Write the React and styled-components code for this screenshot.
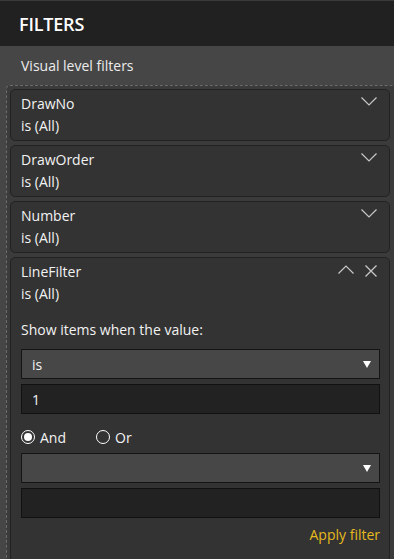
import React from "react";
import styled, { createGlobalStyle } from "styled-components";

const Global = createGlobalStyle`
  html, body { margin: 0; padding: 0; background: #464646; }
  body { font-family: "Open Sans", "Noto Sans", sans-serif; color: #f0f0f0; overflow: hidden; }
  * { box-sizing: border-box; }
`;

const Pane = styled.div`
  width: 394px;
  height: 559px;
  background: #464646;
  overflow: hidden;
  display: flex;
  flex-direction: column;
`;

const Header = styled.div`
  height: 46px;
  flex: none;
  background: #212121;
  border-top: 1px solid #3a3a3a;
  display: flex;
  align-items: center;
  padding-left: 19px;
  font-size: 18px;
  font-weight: 600;
  color: #ffffff;
  letter-spacing: -0.2px;
`;

const SectionTitle = styled.div`
  height: 39px;
  flex: none;
  display: flex;
  align-items: center;
  padding-left: 21px;
  font-size: 14px;
  color: #ececec;
`;

const DropZone = styled.div`
  margin-left: 6px;
  width: 390px;
  flex: none;
  border: 1px dashed #6c6c6c;
  border-radius: 4px;
  background: #3b3b3b;
  padding: 3px 0 40px 3px;
  display: flex;
  flex-direction: column;
  gap: 4px;
`;

const Card = styled.div`
  width: 380px;
  background: #333333;
  border: 1px solid #222222;
  border-radius: 5px;
  padding: 3px 10px ${(p) => (p.$open ? "40px" : "3px")} 10px;
  flex: none;
`;

const TitleRow = styled.div`
  display: flex;
  justify-content: space-between;
  align-items: flex-start;
`;

const Line = styled.div`
  font-size: 14px;
  line-height: 22px;
  color: #f2f2f2;
`;

const Icons = styled.div`
  display: flex;
  gap: 11px;
  padding-top: 4px;
  margin-right: 2px;
`;

const Label = styled.div`
  font-size: 14px;
  line-height: 22px;
  color: #f2f2f2;
  margin-top: 14px;
  margin-bottom: 8px;
`;

const Select = styled.div`
  height: 30px;
  width: 359px;
  background: #474747;
  border: 1px solid #141414;
  display: flex;
  align-items: center;
  justify-content: space-between;
  padding: 0 8px 0 10px;
  font-size: 14px;
  color: #f2f2f2;
`;

const Input = styled.div`
  height: 30px;
  width: 359px;
  margin-top: 5px;
  background: #222222;
  border: 1px solid #111111;
  display: flex;
  align-items: center;
  padding: 0 10px;
  font-size: 14px;
  color: #f2f2f2;
`;

const RadioRow = styled.div`
  display: flex;
  align-items: center;
  height: 22px;
  margin: 12px 0 5px;
`;

const Radio = styled.label`
  display: flex;
  align-items: center;
  gap: 5px;
  font-size: 14px;
  color: #f2f2f2;
  width: ${(p) => p.$w}px;
`;

const Dot = styled.span`
  width: 14px;
  height: 14px;
  border-radius: 50%;
  border: 1.5px solid #ffffff;
  display: inline-flex;
  align-items: center;
  justify-content: center;
  &::after {
    content: "";
    width: 8px;
    height: 8px;
    border-radius: 50%;
    background: ${(p) => (p.$on ? "#ffffff" : "transparent")};
  }
`;

const Caret = styled.span`
  width: 0;
  height: 0;
  border-left: 4px solid transparent;
  border-right: 4px solid transparent;
  border-top: 7px solid #ffffff;
`;

const Apply = styled.div`
  width: 359px;
  text-align: right;
  font-size: 14px;
  line-height: 22px;
  color: #e6b91e;
  margin-top: 6px;
`;

const ChevronDown = () => (
  <svg width="16" height="9" viewBox="0 0 16 9" fill="none" stroke="#c8c8c8" strokeWidth="1.2">
    <path d="M0.5 0.5 L8 8 L15.5 0.5" />
  </svg>
);

const ChevronUp = () => (
  <svg width="16" height="9" viewBox="0 0 16 9" fill="none" stroke="#c8c8c8" strokeWidth="1.2">
    <path d="M0.5 8.5 L8 1 L15.5 8.5" />
  </svg>
);

const Close = () => (
  <svg width="12" height="12" viewBox="0 0 12 12" fill="none" stroke="#c8c8c8" strokeWidth="1.3">
    <path d="M0.5 0.5 L11.5 11.5 M11.5 0.5 L0.5 11.5" />
  </svg>
);

const collapsed = ["DrawNo", "DrawOrder", "Number"];

export default function App() {
  return (
    <>
      <Global />
      <Pane>
        <Header>FILTERS</Header>
        <SectionTitle>Visual level filters</SectionTitle>
        <DropZone>
          {collapsed.map((name) => (
            <Card key={name}>
              <TitleRow>
                <Line>{name}</Line>
                <Icons>
                  <ChevronDown />
                </Icons>
              </TitleRow>
              <Line>is (All)</Line>
            </Card>
          ))}
          <Card $open>
            <TitleRow>
              <Line>LineFilter</Line>
              <Icons>
                <ChevronUp />
                <Close />
              </Icons>
            </TitleRow>
            <Line>is (All)</Line>
            <Label>Show items when the value:</Label>
            <Select>
              <span>is</span>
              <Caret />
            </Select>
            <Input>1</Input>
            <RadioRow>
              <Radio $w={75}>
                <Dot $on />
                And
              </Radio>
              <Radio $w={60}>
                <Dot />
                Or
              </Radio>
            </RadioRow>
            <Select>
              <span />
              <Caret />
            </Select>
            <Input />
            <Apply>Apply filter</Apply>
          </Card>
        </DropZone>
      </Pane>
    </>
  );
}
